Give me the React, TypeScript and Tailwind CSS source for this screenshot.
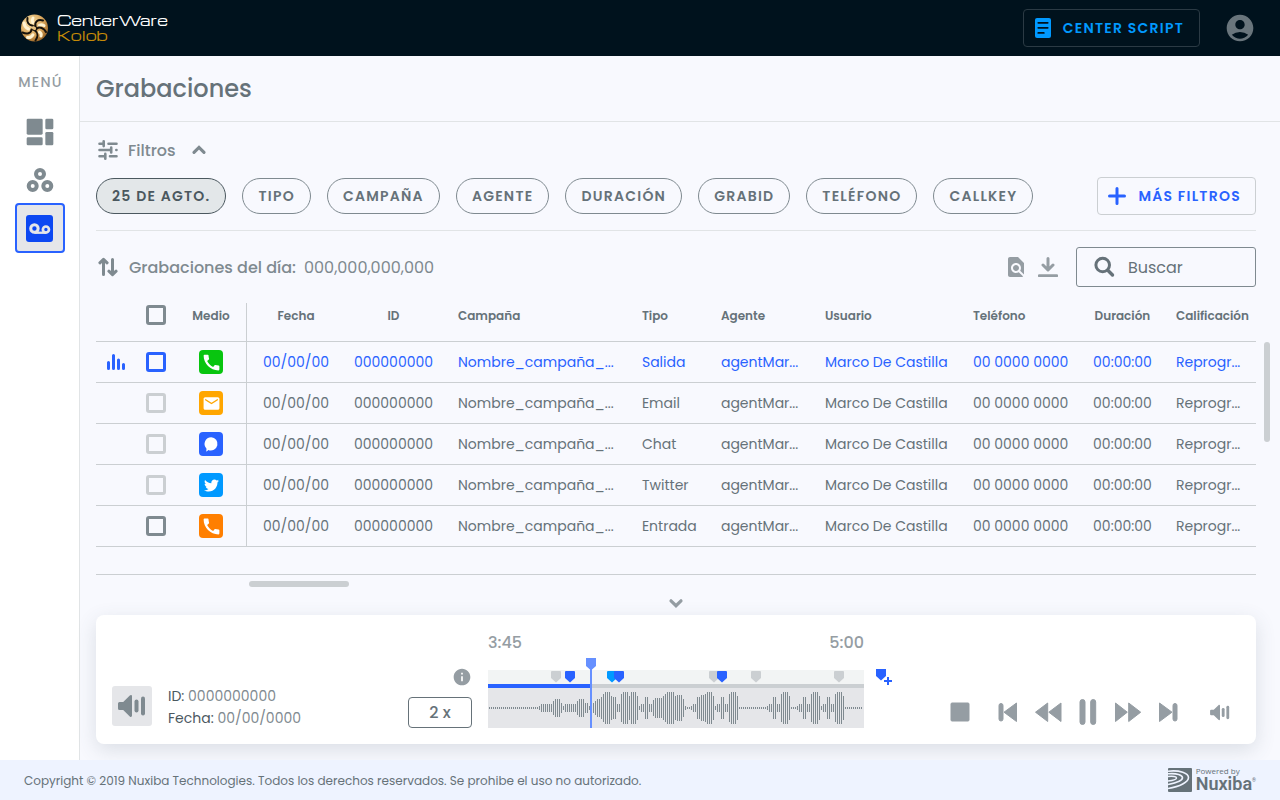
import type { ReactNode } from "react";
import {
  MdAccountCircle,
  MdCall,
  MdEmail,
  MdFindInPage,
  MdInfo,
} from "react-icons/md";
import { FaTwitter } from "react-icons/fa";

const menuItems = [
  { label: "Tablero", icon: <DashboardIcon />, active: false },
  { label: "Grupos", icon: <GroupsIcon />, active: false },
  { label: "Grabaciones", icon: <VoicemailIcon />, active: true },
];

const filters = ["25 de agto.", "Tipo", "Campaña", "Agente", "Duración", "GrabID", "Teléfono", "Callkey"];

type Row = { kind: string; tone: string; badge: string; icon: ReactNode; check: string; playing?: boolean };

const rows: Row[] = [
  { kind: "Salida", tone: "text-[#2962ff]", badge: "bg-[#08c50f]", icon: <MdCall size={21} />, check: "border-[#2962ff]", playing: true },
  { kind: "Email", tone: "text-[#667279]", badge: "bg-[#ffa600]", icon: <MdEmail size={19} />, check: "border-[#cbcfd2]" },
  { kind: "Chat", tone: "text-[#667279]", badge: "bg-[#2962ff]", icon: <ChatIcon />, check: "border-[#cbcfd2]" },
  { kind: "Twitter", tone: "text-[#667279]", badge: "bg-[#0099ff]", icon: <FaTwitter size={15} />, check: "border-[#cbcfd2]" },
  { kind: "Entrada", tone: "text-[#667279]", badge: "bg-[#ff7f00]", icon: <MdCall size={21} />, check: "border-[#7f8a90]" },
];

// Pairs of [bar height, number of bars], left to right.
const waveRuns: [number, number][] = [
  [2, 25], [4, 1], [8, 6], [14, 1], [18, 3], [10, 1], [4, 1], [8, 6], [14, 1], [18, 3], [10, 2], [4, 2],
  [10, 1], [14, 1], [18, 2], [22, 1], [28, 1], [32, 3], [24, 1], [22, 2], [8, 2], [28, 1], [32, 3], [24, 1],
  [32, 3], [24, 1], [4, 1], [8, 2], [22, 2], [8, 2], [16, 1], [20, 4], [24, 1], [28, 1], [32, 4], [24, 1],
  [26, 3], [18, 1], [4, 1], [2, 2], [4, 1], [8, 2], [22, 2], [26, 2], [28, 1], [32, 3], [24, 1], [4, 1],
  [8, 2], [22, 2], [8, 2], [28, 1], [32, 3], [24, 1], [2, 14], [4, 1], [8, 2], [22, 2], [8, 2], [28, 1],
  [32, 3], [24, 1], [2, 3], [4, 1], [8, 2], [22, 2], [8, 2], [28, 1], [32, 3], [24, 1], [4, 1], [8, 2],
  [22, 2], [8, 2], [28, 1], [32, 3], [24, 1], [2, 9],
];
const waveBars = waveRuns.flatMap(([height, count]) => Array<number>(count).fill(height));

const markers = [
  { x: 63, color: "#cbcfd2" },
  { x: 77, color: "#2962ff" },
  { x: 119, color: "#0099ff" },
  { x: 126, color: "#2962ff" },
  { x: 221, color: "#cbcfd2" },
  { x: 229, color: "#2962ff" },
  { x: 263, color: "#cbcfd2" },
  { x: 346, color: "#cbcfd2" },
];

function DashboardIcon() {
  return (
    <svg viewBox="0 0 24 24" className="size-8" fill="#7f8a90" aria-hidden="true">
      <rect x="2" y="2" width="12" height="12" rx="1" />
      <rect x="16" y="2" width="6" height="8" rx="1" />
      <rect x="16" y="12" width="6" height="10" rx="1" />
      <rect x="2" y="16" width="12" height="6" rx="1" />
    </svg>
  );
}

function GroupsIcon() {
  return (
    <svg viewBox="0 0 32 32" className="size-8" fill="none" stroke="#7f8a90" strokeWidth="4" aria-hidden="true">
      <circle cx="16" cy="10" r="4" />
      <circle cx="8.7" cy="22" r="4" />
      <circle cx="23.3" cy="22" r="4" />
    </svg>
  );
}

function VoicemailIcon() {
  return (
    <svg viewBox="0 0 80 80" className="size-[27px]" fill="none" stroke="#e5e6e9" aria-hidden="true">
      <rect width="80" height="80" rx="9" fill="#0d48f2" stroke="none" />
      <circle cx="25" cy="40" r="11" strokeWidth="9" />
      <circle cx="59" cy="43" r="9" strokeWidth="8" />
      <path d="M25 52.5H59" strokeWidth="7" />
    </svg>
  );
}

function ChatIcon() {
  return (
    <svg viewBox="0 0 24 24" className="size-6" fill="#fff" aria-hidden="true">
      <path d="M12.2 5.2a6.7 6.7 0 1 1-2.9 12.9c-.5.8-1.300 1.200-2.300 1.300.5-.8.6-1.800.4-2.900A6.700 6.700 0 0 1 12.200 5.200Z" />
    </svg>
  );
}

function SphereLogo() {
  return (
    <svg viewBox="0 0 28 28" className="size-7" aria-hidden="true">
      <defs>
        <radialGradient id="gold" cx="0.35" cy="0.3" r="0.8">
          <stop offset="0" stopColor="#f7dfa6" />
          <stop offset="0.6" stopColor="#d9a55a" />
          <stop offset="1" stopColor="#8a561b" />
        </radialGradient>
      </defs>
      <circle cx="14.5" cy="14" r="13.5" fill="url(#gold)" />
      <g fill="none" stroke="#fff3d2" strokeWidth="3" strokeLinecap="round">
        <path d="M4 9c.5 3 2 5 4.500 6" />
        <path d="M13 4c-1 1.500-1 3-.2 4.500" />
        <path d="M19.500 11.300c1.500-.8 3-.5 4.500.2" />
        <path d="M19.500 18c1.500 1 2 2.500 1.500 4" />
        <path d="M7.500 23.500c2.500.3 4.300-.7 5.500-2.800" />
      </g>
      <g fill="none" stroke="#16120c" strokeWidth="2" strokeLinecap="round">
        <path d="M12 11.500C9 11 6.500 8.500 7.500 4" />
        <path d="M15.500 12C14.500 8 17.500 5 23 6.500" />
        <path d="M17 14.500C19.500 12.500 24 14 26 18" />
        <path d="M15.500 17C18 19 18 23 15.500 26.500" />
        <path d="M11.500 15.500C11 19.500 7 20.500 2.500 18.500" />
        <path d="M12 11.500L15.500 12 17 14.500 15.500 17 11.500 15.500" strokeWidth="1.2" />
      </g>
    </svg>
  );
}

function TuneIcon() {
  return (
    <svg viewBox="0 0 20 20" className="size-5" fill="none" stroke="#7f8a90" strokeWidth="2.6" strokeLinecap="round" aria-hidden="true">
      <path d="M1.500 3.700h4M5.700 1.300v4.800M10.500 3.700h8M1.500 10h11M13.200 7.600v4.800M18.300 10h.2M1.500 16.300h5M7.300 13.900v4.800M12 16.300h6.500" />
    </svg>
  );
}

function Chevron({ up = false }: { up?: boolean }) {
  return (
    <svg viewBox="0 0 24 24" className="size-6" fill="none" stroke={up ? "#7f8a90" : "#959da3"} strokeWidth="3.2" strokeLinecap="round" aria-hidden="true">
      <path d={up ? "M7 14.300l5-4.900 5 4.900" : "M7 9.800l5 4.900 5-4.900"} />
    </svg>
  );
}

function SortIcon() {
  return (
    <svg viewBox="0 0 20 20" className="size-5" fill="none" stroke="#7f8a90" strokeWidth="3" strokeLinecap="round" strokeLinejoin="round" aria-hidden="true">
      <path d="M5.500 17.500V3M1.900 5.800L5.500 2.300 9.100 5.800M14.500 2.500V17M10.900 14.200l3.600 3.500 3.600-3.500" />
    </svg>
  );
}

function SpeakerIcon({ className, color }: { className: string; color: string }) {
  return (
    <svg viewBox="0 0 28 24" className={className} fill={color} aria-hidden="true">
      <path d="M1.500 8h3.700l6.600-6.400c1-1 2.200-.5 2.200.8v19.200c0 1.300-1.200 1.800-2.200.8L5.200 16H1.500A1.500 1.500 0 0 1 0 14.500v-5A1.500 1.500 0 0 1 1.500 8Z" />
      <rect x="16.5" y="5.5" width="4" height="13" rx="2" />
      <rect x="23" y="2.5" width="4" height="19" rx="2" />
    </svg>
  );
}

function PlayerButton({ label, children }: { label: string; children: ReactNode }) {
  return (
    <button type="button" aria-label={label} className="flex h-8 w-10 items-center justify-center">
      <svg viewBox="0 0 32 32" className="size-8" fill="#959da3" stroke="#959da3" strokeLinejoin="round" aria-hidden="true">
        {children}
      </svg>
    </button>
  );
}

function Header() {
  return (
    <header className="flex h-14 items-center justify-between bg-[#00121d] pr-6 pl-5">
      <a href="#inicio" className="flex items-center gap-[9px]">
        <SphereLogo />
        <span className="flex flex-col font-['Michroma','DejaVu_Sans',sans-serif]">
          <span className="text-sm leading-[15px] text-white">CenterWare</span>
          <span className="text-sm leading-[15px] text-[#c58a08]">Kolob</span>
        </span>
      </a>
      <div className="flex items-center gap-6">
        <button type="button" className="flex h-[38px] items-center gap-3 rounded border border-[#2b3a44] pr-[15px] pl-[11px] text-sm font-semibold tracking-[1.25px] text-[#0099ff]">
          <svg viewBox="0 0 16 20" className="h-5 w-4" aria-hidden="true">
            <rect width="16" height="20" rx="2" fill="#0099ff" />
            <path d="M3.300 4.800h9.400M3.300 9.800h9.400M3.300 14.900h5.500" stroke="#00121d" strokeWidth="1.8" strokeLinecap="round" />
          </svg>
          CENTER SCRIPT
        </button>
        <button type="button" aria-label="Cuenta" className="text-[#69757c]">
          <MdAccountCircle size={32} />
        </button>
      </div>
    </header>
  );
}

function Sidebar() {
  return (
    <nav className="w-20 shrink-0 border-r border-[#e1e4e6] bg-white pt-4">
      <p className="pl-0.5 text-center text-sm leading-5 font-medium tracking-[1.25px] text-[#959da3]">MENÚ</p>
      <ul className="mt-4 flex flex-col items-center">
        {menuItems.map((item) => (
          <li key={item.label} className="flex h-12 items-center">
            <a
              href={`#${item.label.toLowerCase()}`}
              aria-label={item.label}
              className={
                item.active
                  ? "flex size-[50px] items-center justify-center rounded border-2 border-[#2962ff] bg-[#e5e6e9]"
                  : "flex size-12 items-center justify-center"
              }
            >
              {item.icon}
            </a>
          </li>
        ))}
      </ul>
    </nav>
  );
}

function RecordingsTable() {
  const cell = "h-[41px] border-b border-[#cbcfd2] whitespace-nowrap";
  const head = "h-[39px] border-b border-[#cbcfd2] text-xs font-semibold";
  const box = "block size-5 appearance-none rounded-[3px] border-3";
  return (
    <table className="w-full table-fixed border-separate border-spacing-0 text-[#667279]">
      <colgroup>
        <col className="w-10" />
        <col className="w-10" />
        <col className="w-[71px]" />
        <col className="w-[98px]" />
        <col className="w-[97px]" />
        <col />
        <col className="w-[79px]" />
        <col className="w-[104px]" />
        <col className="w-[148px]" />
        <col className="w-[128px]" />
        <col className="w-[75px]" />
        <col className="w-24" />
      </colgroup>
      <thead>
        <tr>
          <th className={`${head} pb-3`} />
          <th className={`${head} px-2.5 pb-3.5`}>
            <input type="checkbox" aria-label="Seleccionar todo" className={`${box} border-[#7f8a90]`} />
          </th>
          <th className={`${head} border-r pb-3`}>Medio</th>
          <th className={`${head} pb-3`}>Fecha</th>
          <th className={`${head} pb-3`}>ID</th>
          <th className={`${head} pb-3 pl-4 text-left`}>Campaña</th>
          <th className={`${head} pb-3 pl-4 text-left`}>Tipo</th>
          <th className={`${head} pb-3 pl-4 text-left`}>Agente</th>
          <th className={`${head} pb-3 pl-4 text-left`}>Usuario</th>
          <th className={`${head} pb-3 pl-4 text-left`}>Teléfono</th>
          <th className={`${head} pb-3`}>Duración</th>
          <th className={`${head} pb-3 pl-4 text-left`}>Calificación</th>
        </tr>
      </thead>
      <tbody className="text-sm">
        {rows.map((row) => (
          <tr key={row.kind} className={row.tone}>
            <td className={`${cell} pl-2.5`}>
              {row.playing && (
                <svg viewBox="0 0 20 18" className="h-[18px] w-5" stroke="#2962ff" strokeWidth="3" strokeLinecap="round" aria-hidden="true">
                  <path d="M2.500 9.500v6M7.500 2.500v13M12.500 7v8.500M17.500 11.500v4" />
                </svg>
              )}
            </td>
            <td className={`${cell} px-2.5`}>
              <input type="checkbox" aria-label={`Seleccionar ${row.kind}`} className={`${box} ${row.check}`} />
            </td>
            <td className={`${cell} border-r`}>
              <span className={`mx-auto flex size-6 items-center justify-center rounded text-white ${row.badge}`}>{row.icon}</span>
            </td>
            <td className={`${cell} text-center`}>00/00/00</td>
            <td className={`${cell} text-center`}>000000000</td>
            <td className={`${cell} pl-4`}>Nombre_campaña_...</td>
            <td className={`${cell} pl-4`}>{row.kind}</td>
            <td className={`${cell} pl-4`}>agentMar...</td>
            <td className={`${cell} pl-4`}>Marco De Castilla</td>
            <td className={`${cell} pl-4`}>00 0000 0000</td>
            <td className={`${cell} text-center`}>00:00:00</td>
            <td className={`${cell} pl-4`}>Reprogr...</td>
          </tr>
        ))}
      </tbody>
    </table>
  );
}

function Waveform() {
  return (
    <svg viewBox="0 0 376 70" className="block h-[70px] w-full" aria-hidden="true">
      <rect y="12" width="376" height="14" fill="#f2f4f4" />
      <rect y="30" width="376" height="40" fill="#e5e6e9" />
      <rect y="26" width="376" height="4" fill="#cbcfd2" />
      <rect y="26" width="102" height="4" fill="#2962ff" />
      {waveBars.map((height, i) => (
        <rect key={i} x={1 + i * 2} y={50 - height / 2} width="1" height={height} fill="#7f8a90" />
      ))}
      {markers.map((marker) => (
        <path key={marker.x} d={`M${marker.x} 14q0-1 1-1h8q1 0 1 1v6l-5 4.500-5-4.500z`} fill={marker.color} />
      ))}
      <path d="M98 0h10v8l-4 3.500V70h-2V11.500L98 8z" fill="#6690ff" />
    </svg>
  );
}

function Player() {
  return (
    <section aria-label="Reproductor" className="flex items-end rounded-lg bg-white px-4 pt-4 pb-4 shadow-[0_6px_20px_rgba(70,90,100,0.16)]">
      <div className="flex w-[296px] items-center gap-4">
        <span className="flex size-10 items-center justify-center rounded-[3px] bg-[#e5e6e9]">
          <SpeakerIcon className="h-6 w-7" color="#7f8a90" />
        </span>
        <p className="h-11 pt-px text-sm leading-[22px] text-[#7f8a90]">
          <span className="text-[#4b585f]">ID:</span> 0000000000
          <br />
          <span className="text-[#4b585f]">Fecha:</span> 00/00/0000
        </p>
      </div>
      <div className="flex w-16 flex-col items-end gap-2.5">
        <button type="button" aria-label="Información" className="text-[#959da3]">
          <MdInfo size={20} />
        </button>
        <button type="button" className="h-[31px] w-full rounded border border-[#667279] text-base leading-none font-medium text-[#667279]">
          2 x
        </button>
      </div>
      <div className="ml-4 w-[376px]">
        <div className="mb-[3px] flex justify-between text-base leading-6 font-medium text-[#959da3]">
          <span>3:45</span>
          <span>5:00</span>
        </div>
        <div className="relative">
          <Waveform />
          <input type="range" aria-label="Posición" min={0} max={300} defaultValue={225} className="absolute inset-0 size-full opacity-0" />
        </div>
      </div>
      <button type="button" aria-label="Agregar marcador" className="mb-[43px] ml-3">
        <svg viewBox="0 0 16 16" className="size-4" fill="#2962ff" aria-hidden="true">
          <path d="M0 0h10v7l-5 4.500L0 7z" />
          <path d="M11 8h2v3h3v2h-3v3h-2v-3H8v-2h3z" />
        </svg>
      </button>
      <div className="ml-auto flex items-center">
        <PlayerButton label="Detener">
          <rect x="7" y="7" width="18" height="18" rx="1" />
        </PlayerButton>
        <div className="mx-2 flex">
          <PlayerButton label="Anterior">
            <rect x="7" y="7.5" width="4" height="17.5" rx="2" />
            <path d="M12 16.200L24.500 7v18.500z" />
          </PlayerButton>
          <PlayerButton label="Retroceder">
            <path d="M3.500 16.200L15.700 7v18.500zM16.800 16.200L29 7v18.500z" />
          </PlayerButton>
          <PlayerButton label="Pausa">
            <rect x="8" y="3.5" width="5" height="25" rx="2.5" />
            <rect x="18.7" y="3.5" width="5" height="25" rx="2.5" />
          </PlayerButton>
          <PlayerButton label="Avanzar">
            <path d="M15.300 16.200L3.500 7v18.500zM28.700 16.200L16.700 7v18.500z" />
          </PlayerButton>
          <PlayerButton label="Siguiente">
            <path d="M20 16.200L7.500 7v18.500z" />
            <rect x="21" y="7.5" width="4" height="17.5" rx="2" />
          </PlayerButton>
        </div>
        <button type="button" aria-label="Volumen" className="ml-1 flex h-8 w-10 items-center justify-center">
          <SpeakerIcon className="h-[17px] w-5" color="#959da3" />
        </button>
      </div>
    </section>
  );
}

function Footer() {
  return (
    <footer className="flex h-10 items-center justify-between bg-[#eef3ff] px-6 text-[#667279]">
      <p className="pt-0.5 text-xs">Copyright © 2019 Nuxiba Technologies. Todos los derechos reservados. Se prohibe el uso no autorizado.</p>
      <div className="flex items-center gap-1">
        <svg viewBox="0 0 24 24" className="size-6" aria-hidden="true">
          <rect width="24" height="24" rx="1" fill="#667279" />
          <g fill="none" stroke="#eef3ff">
            <path d="M0 3.200C12 2 20.500 5 20.500 9.500S12 18.500 0 20.500" strokeWidth="1.6" />
            <path d="M0 5.800C9 5 14.500 7 14.500 9.800S9 14.800 0 16.500" strokeWidth="1.6" />
            <path d="M0 8.500c5-.5 8.500 0 8.500 1.500S5 12.500 0 13" strokeWidth="1.5" />
          </g>
        </svg>
        <div className="flex flex-col">
          <span className="font-['Open_Sans',sans-serif] text-[8px] leading-2">Powered by</span>
          <span className="flex font-['Roboto',sans-serif] text-[18px] leading-[18px] font-semibold">
            Nuxiba
            <span className="text-[5px] leading-[10px]">®</span>
          </span>
        </div>
      </div>
    </footer>
  );
}

export default function App() {
  return (
    <div className="flex min-h-screen flex-col bg-[#f8f9fe] font-['Poppins','Inter',sans-serif]">
      <Header />
      <div className="flex grow">
        <Sidebar />
        <main className="flex min-w-0 grow flex-col">
          <h1 className="flex h-[66px] items-center border-b border-[#e1e4e6] px-4 text-2xl font-medium text-[#667279]">Grabaciones</h1>
          <div className="flex grow flex-col pt-4 pr-6 pb-4 pl-4">
            <button type="button" className="flex h-6 items-center self-start pl-0.5 text-base font-medium text-[#7f8a90]">
              <TuneIcon />
              <span className="mr-[11px] ml-2.5 pt-0.5">Filtros</span>
              <Chevron up />
            </button>
            <div className="mt-[15px] flex items-center gap-4 border-b border-[#e1e4e6] pb-[15px]">
              {filters.map((filter, i) => (
                <button
                  key={filter}
                  type="button"
                  className={
                    i === 0
                      ? "h-9 rounded-full border border-[#4b585f] bg-[#e3e7e9] px-[15px] text-sm font-semibold tracking-[1.25px] whitespace-nowrap text-[#4b585f] uppercase"
                      : "h-9 rounded-full border border-[#7f8a90] px-[15px] text-sm font-semibold tracking-[1.25px] whitespace-nowrap text-[#667279] uppercase"
                  }
                >
                  {filter}
                </button>
              ))}
              <button type="button" className="ml-auto flex h-[38px] items-center gap-3 rounded border border-[#cbcfd2] pr-3.5 pl-2.5 text-sm font-semibold tracking-[1.25px] whitespace-nowrap text-[#2962ff]">
                <svg viewBox="0 0 18 18" className="size-[18px]" stroke="#2962ff" strokeWidth="3" strokeLinecap="round" aria-hidden="true">
                  <path d="M9 1.500v15M1.500 9h15" />
                </svg>
                MÁS FILTROS
              </button>
            </div>
            <div className="flex items-center pt-4">
              <button type="button" aria-label="Ordenar" className="ml-0.5">
                <SortIcon />
              </button>
              <h2 className="ml-[11px] pt-0.5 text-base font-medium text-[#7f8a90]">Grabaciones del día:</h2>
              <span className="ml-2 pt-0.5 text-base text-[#7f8a90]">000,000,000,000</span>
              <button type="button" aria-label="Buscar en página" className="ml-auto text-[#959da3]">
                <MdFindInPage size={24} />
              </button>
              <button type="button" aria-label="Descargar" className="ml-2.5">
                <svg viewBox="0 0 20 20" className="size-5" fill="none" stroke="#959da3" strokeWidth="3" strokeLinecap="round" strokeLinejoin="round" aria-hidden="true">
                  <path d="M10 1.500v10M5 8l5 5 5-5M1.300 18.700h17.400" />
                </svg>
              </button>
              <label className="ml-[18px] flex h-10 w-[180px] items-center rounded-[3px] border border-[#7f8a90] pl-[17px]">
                <svg viewBox="0 0 22 22" className="size-[22px] shrink-0" fill="none" stroke="#667279" strokeWidth="3" strokeLinecap="round" aria-hidden="true">
                  <circle cx="8.7" cy="9" r="6.8" />
                  <path d="M14 14.500l4.500 4.500" strokeWidth="3.4" />
                </svg>
                <input type="text" aria-label="Buscar" placeholder="Buscar" className="ml-3 w-full min-w-0 bg-transparent pt-0.5 text-base text-[#667279] outline-none placeholder:text-[#667279]" />
              </label>
            </div>
            <div className="flex pt-4">
              <div className="min-w-0 grow">
                <RecordingsTable />
              </div>
              <div className="mt-[39px] -mr-3.5 ml-2 h-[100px] w-1.5 shrink-0 rounded-full bg-[#cbcfd2]" />
            </div>
            <div className="mt-[27px] border-t border-[#cbcfd2] pt-1.5">
              <div className="ml-[153px] h-1.5 w-[100px] rounded-full bg-[#cbcfd2]" />
            </div>
            <button type="button" aria-label="Contraer reproductor" className="mt-1 self-center">
              <Chevron />
            </button>
            <Player />
          </div>
        </main>
      </div>
      <Footer />
    </div>
  );
}
